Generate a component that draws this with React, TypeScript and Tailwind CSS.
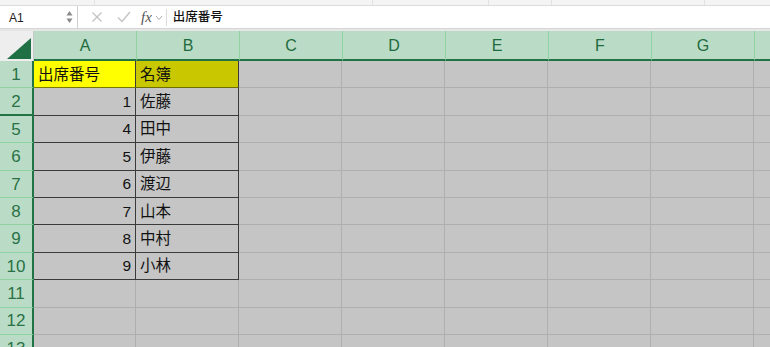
const font = {
  fontFamily: '"Liberation Sans", "Noto Sans CJK JP", sans-serif',
};

const COLS = ["A", "B", "C", "D", "E", "F", "G", "H"];

type Row = { label: string; num?: string; name?: string };

const ROWS: Row[] = [
  { label: "1" },
  { label: "2", num: "1", name: "佐藤" },
  { label: "5", num: "4", name: "田中" },
  { label: "6", num: "5", name: "伊藤" },
  { label: "7", num: "6", name: "渡辺" },
  { label: "8", num: "7", name: "山本" },
  { label: "9", num: "8", name: "中村" },
  { label: "10", num: "9", name: "小林" },
  { label: "11" },
  { label: "12" },
  { label: "13" },
];

function RibbonStrip() {
  return (
    <div className="flex h-[6px] border-b border-[#dcdcdc] bg-[#f4f4f4]">
      <div className="w-[95px] shrink-0 border-r border-[#e2e2e2]" />
      <div className="w-[278px] shrink-0 border-r border-[#e2e2e2]" />
      <div className="w-[116px] shrink-0 border-r border-[#e2e2e2]" />
      <div className="w-[63px] shrink-0 border-r border-[#e2e2e2]" />
      <div className="w-[153px] shrink-0 border-r border-[#e2e2e2]" />
      <div className="flex-1" />
    </div>
  );
}

function FormulaBar() {
  return (
    <div className="flex h-[23px] items-center border-b border-[#d6d6d6] bg-white">
      <div className="flex h-full w-[78px] shrink-0 items-center justify-between border-r border-[#d0d0d0] pl-[9px] pr-[4px]">
        <span className="mt-[1px] text-[12px] text-[#222]">A1</span>
        <svg width="7" height="14" viewBox="0 0 7 14">
          <path d="M3.5 1 L6.5 5.5 L0.5 5.5 Z" fill="#8a8a8a" />
          <path d="M3.5 13 L6.5 8.5 L0.5 8.5 Z" fill="#8a8a8a" />
        </svg>
      </div>
      <div className="flex h-full items-center pl-[13px]">
        <svg width="12" height="12" viewBox="0 0 12 12">
          <path d="M1.5 1.5 L10.5 10.5 M10.5 1.5 L1.5 10.5" stroke="#c4c4c4" strokeWidth="1.4" />
        </svg>
        <svg width="14" height="12" viewBox="0 0 14 12" className="ml-[14px]">
          <path d="M1 6.5 L5 10.5 L13 1" stroke="#c4c4c4" strokeWidth="1.4" fill="none" />
        </svg>
        <span
          className="ml-[10px] text-[15px] italic text-[#555]"
          style={{ fontFamily: '"Liberation Serif", serif' }}
        >
          fx
        </span>
        <svg width="8" height="6" viewBox="0 0 8 6" className="ml-[3px] mt-[2px]">
          <path d="M1 1 L4 4.5 L7 1" stroke="#b0b0b0" strokeWidth="1" fill="none" />
        </svg>
        <div className="ml-[3px] h-[17px] w-px bg-[#dadada]" />
        <span className="ml-[6px] mt-[1px] text-[12.5px] font-medium text-[#111]">出席番号</span>
      </div>
    </div>
  );
}

function HeaderRow() {
  return (
    <div className="flex h-[30px] shrink-0">
      <div className="relative h-full w-[34px] shrink-0 border-r border-[#c8c8c8] bg-[#eeeeee]">
        <svg width="24" height="21" viewBox="0 0 24 21" className="absolute left-[7px] top-[7px]">
          <path d="M24 0 L24 21 L0 21 Z" fill="#1f7145" />
        </svg>
      </div>
      {COLS.map((c) => (
        <div
          key={c}
          className="flex h-full w-[103px] shrink-0 items-center justify-center border-r border-b-2 border-r-[#8fd4a0] border-b-[#217346] bg-[#badcc6] pt-[1px] text-[16px] text-[#1e6b3e]"
        >
          {c}
        </div>
      ))}
    </div>
  );
}

function SheetRow({ row, index }: { row: Row; index: number }) {
  const first = index === 0;
  const inTable = index <= 7;
  const afterHidden = index === 1;
  const cellBorder = inTable ? "border-b-[#3a3a3a]" : "border-b-[#aeaeae]";
  return (
    <div className="flex h-[27.4px] shrink-0">
      <div
        className={`flex h-full w-[34px] shrink-0 items-center justify-center border-r-2 border-r-[#217346] bg-[#badcc6] pt-[1px] text-[17px] text-[#2a7147] ${
          afterHidden ? "border-b-2 border-b-[#217346]" : "border-b border-b-[#8fd4a0]"
        }`}
      >
        {row.label}
      </div>
      <div
        className={`flex h-full w-[102px] shrink-0 items-center border-b px-[4px] text-[15.5px] text-[#111] ${
          first ? "justify-start bg-[#ffff00] border-b-[#7a7a00]" : `justify-end bg-[#c5c5c5] ${cellBorder}`
        } ${inTable ? "border-r border-r-[#3a3a3a]" : "border-r border-r-[#aeaeae]"}`}
      >
        {first ? "出席番号" : row.num}
      </div>
      <div
        className={`flex h-full w-[103px] shrink-0 items-center border-b px-[4px] text-[15.5px] text-[#111] ${
          first ? "bg-[#c9c800] border-b-[#6f6f00]" : `bg-[#c5c5c5] ${cellBorder}`
        } ${inTable ? "border-r border-r-[#3a3a3a]" : "border-r border-r-[#aeaeae]"}`}
      >
        {first ? "名簿" : row.name}
      </div>
      {COLS.slice(2).map((c) => (
        <div
          key={c}
          className="h-full w-[103px] shrink-0 border-r border-b border-[#afafaf] bg-[#c5c5c5]"
        />
      ))}
    </div>
  );
}

export default function App() {
  return (
    <div className="h-[347px] w-[770px] overflow-hidden bg-[#c5c5c5]" style={font}>
      <RibbonStrip />
      <FormulaBar />
      <div className="h-[2px] bg-[#e6e6e6]" />
      <HeaderRow />
      {ROWS.map((row, i) => (
        <SheetRow key={row.label} row={row} index={i} />
      ))}
    </div>
  );
}
